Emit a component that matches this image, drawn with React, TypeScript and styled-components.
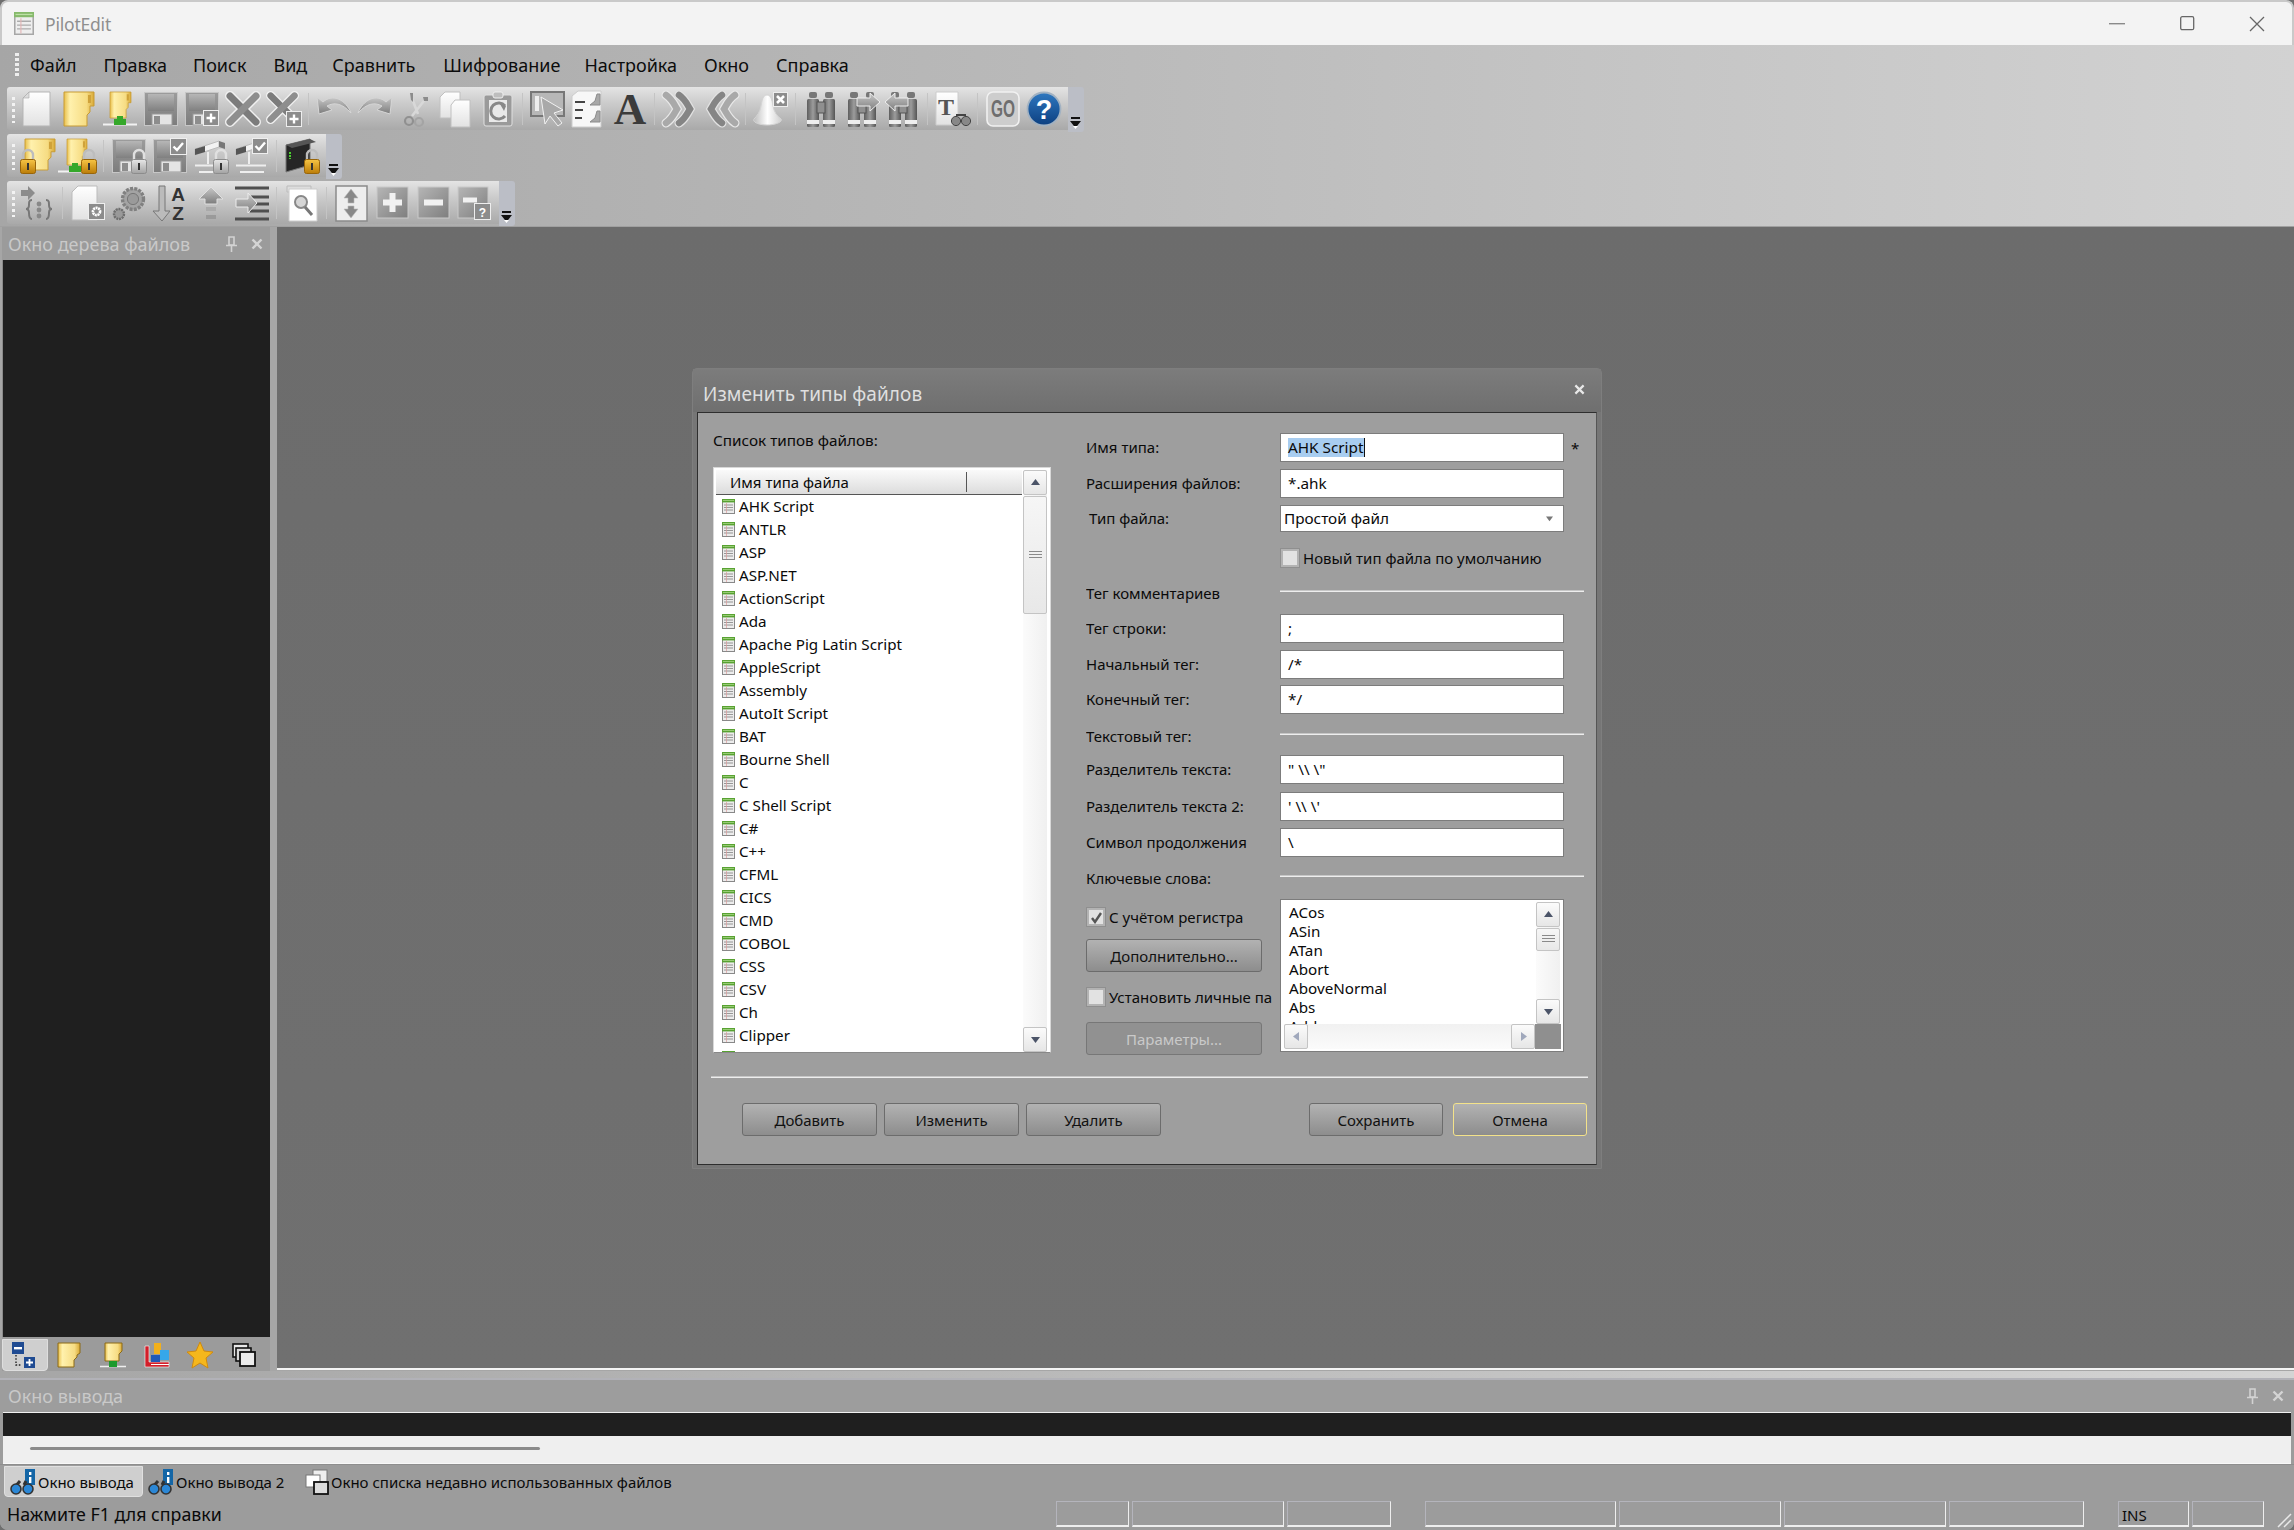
import React from "react";
import styled, { createGlobalStyle } from "styled-components";

const FONT = `"Noto Sans", "Open Sans", "Liberation Sans", sans-serif`;

const Global = createGlobalStyle`
  html, body { margin: 0; padding: 0; background: #6e6e6e; }
  #root { width: 2294px; height: 1530px; overflow: hidden; }
  * { box-sizing: border-box; }
`;

const Window = styled.div`
  position: relative; width: 2294px; height: 1530px; display: flex; flex-direction: column;
  font-family: ${FONT}; color: #0a0a0a; background: #9c9c9c; overflow: hidden;
  border-radius: 8px 8px 8px 8px;
`;
const TitleBar = styled.div`
  height: 45px; flex: none; display: flex; align-items: center; background: #f3f3f3;
  border-top: 2px solid #c9c9c9; border-left: 2px solid #c9c9c9; border-right: 2px solid #c9c9c9;
  border-radius: 8px 8px 0 0; padding-left: 12px;
`;
const TitleIcon = styled.div`opacity: .7; flex: none;`;
const TitleText = styled.span`font-size: 17.5px; color: #8f8f8f; margin-left: 11px; flex: 1; letter-spacing: -.2px;`;
const WinButton = styled.div`width: 70px; height: 43px; display: flex; align-items: center; justify-content: center;`;
const Chrome = styled.div`
  height: 182px; flex: none; display: flex; flex-direction: column;
  background: linear-gradient(90deg, #a6a6a6 0%, #b9b9b9 45%, #d2d2d2 100%);
  border-bottom: 1px solid #a0a0a0;
`;
const MenuBar = styled.div`height: 42px; display: flex; align-items: center; padding: 0 0 2px 15px; flex: none;`;
const MenuGrip = styled.div`
  width: 4px; height: 24px; flex: none;
  background: repeating-linear-gradient(180deg, #eee 0 3px, transparent 3px 5px);
`;
const MenuItem = styled.span<{ $gap: number }>`font-size: 18px; color: #0c0c0c; margin-left: ${p => p.$gap}px; white-space: nowrap;`;
const ToolRow = styled.div`display: flex; height: 45px; margin: 0 0 2px 7px; flex: none; align-items: flex-start;`;
const ToolBody = styled.div`
  display: flex; height: 43px; align-items: center; padding: 0 3.5px 0 10px; position: relative;
  background: linear-gradient(180deg, #e4e4e4 0%, #cdcdcd 35%, #a9a9a9 100%);
  border-radius: 3px 0 0 3px;
`;
const ToolGrip = styled.div`
  position: absolute; left: 5px; top: 10px; width: 3px; height: 26px;
  background: repeating-linear-gradient(180deg, #f3f3f3 0 3px, transparent 3px 6px);
`;
const ToolCell = styled.div`width: 41px; height: 38px; display: flex; align-items: center; justify-content: center; flex: none;`;
const ToolSep = styled.div`
  width: 9px; height: 32px; flex: none; position: relative;
  &::before { content: ""; position: absolute; left: 4px; top: 0; width: 1px; height: 100%; background: #c4c4c4; }
`;
const ToolChevron = styled.div`
  width: 16px; height: 45px; flex: none; background: #bbbec6; border-radius: 0 3px 3px 0;
  display: flex; align-items: flex-end; justify-content: center; padding-bottom: 3px;
`;

const Workspace = styled.div`height: 1144px; flex: none; display: flex; background: #a6a6a6;`;
const LeftPanel = styled.div`
  width: 268px; margin-left: 2px; flex: none; display: flex; flex-direction: column; background: #9b9b9b;
`;
const PanelCaption = styled.div`
  height: 33px; flex: none; display: flex; align-items: center; padding: 0 0 0 6px; font-size: 18px; color: #c9c9c9;
`;
const CaptionText = styled.span`flex: 1; white-space: nowrap;`;
const CaptionIcon = styled.div`width: 26px; display: flex; justify-content: center; align-items: center;`;
const BlackPane = styled.div`flex: 1; background: #1f1f1f; border-left: 1px solid #8a8a8a;`;
const SideTabs = styled.div`height: 34px; flex: none; display: flex; align-items: center; background: #9b9b9b; padding-top: 2px;`;
const SideTab = styled.div<{ $active?: boolean; $w: number }>`
  width: ${p => p.$w}px; height: 32px; display: flex; align-items: center; justify-content: center; flex: none;
  ${p => p.$active ? "background: #cfcfcf; border: 1px solid #dedede; border-radius: 0 0 4px 4px;" : ""}
`;
const MainArea = styled.div`
  margin-left: 7px; flex: 1; background: linear-gradient(180deg, #6c6c6c, #707070); border-bottom: 2px solid #f4f4f4; margin-bottom: 1px;
`;
const Band = styled.div`height: 7px; flex: none; background: linear-gradient(90deg, #a6a6a6, #b9b9b9 45%, #d4d4d4);`;
const OutputCaption = styled(PanelCaption)`
  height: 34px; padding: 0 3px 0 8px; border-top: 2px solid #b2b2b8; background: #9d9d9d;
`;
const OutputBlack = styled.div`height: 24px; flex: none; background: #1f1f1f; border-top: 1px solid #f0f0f0; margin: 0 3px;`;
const OutputLight = styled.div`
  height: 28px; flex: none; background: #efefef; border-bottom: 1px solid #f8f8f8; margin: 0 3px; padding: 11px 0 0 27px;
`;
const HThumb = styled.div`width: 510px; height: 3px; border-radius: 2px; background: #8a8a8a;`;
const OutputTabs = styled.div`height: 33px; flex: none; display: flex; align-items: flex-start; padding-left: 4px; padding-top: 1px; background: #9c9c9c; border-top: 1px solid #8e8e8e;`;
const OutputTab = styled.div<{ $active?: boolean; $w: number }>`
  width: ${p => p.$w}px; height: 31px; display: flex; align-items: center; gap: 2px; font-size: 15px; flex: none; white-space: nowrap; padding-left: 5px;
  ${p => p.$active ? "background: #cfcfcf; border: 1px solid #e0e0e0; border-radius: 0 0 4px 4px;" : ""}
`;
const StatusBar = styled.div`flex: 1; display: flex; align-items: flex-end; background: #9c9c9c; padding: 0 0 3px 7px; position: relative;`;
const StatusText = styled.span`font-size: 17.8px; flex: none; width: 1049px; white-space: nowrap; line-height: 25px;`;
const Pane = styled.div<{ $w: number; $gap?: number }>`
  width: ${p => p.$w}px; height: 26px; margin-left: ${p => p.$gap ?? 3}px; flex: none; font-size: 15px; padding-left: 3px; line-height: 26px;
  border-top: 1px solid #b4b4bc; border-left: 1px solid #b4b4bc; border-right: 1px solid #eee; border-bottom: 2px solid #eee;
`;
const Grip = styled.div`position: absolute; right: 2px; bottom: 2px; width: 17px; height: 17px; display: flex;`;

/* dialog */
const Dialog = styled.div`
  position: absolute; left: 692px; top: 368px; width: 910px; height: 801px; display: flex; flex-direction: column;
  background: #767676; border-radius: 5px 5px 0 0; padding: 0 4px 3px 4px;
  border: 1px solid #7e7e7e;
`;
const DialogTitle = styled.div`
  height: 43px; flex: none; display: flex; align-items: center; justify-content: space-between; padding: 6px 16px 0 10px; margin: 0 -4px;
  font-size: 19px; color: #dfdfdf; background: linear-gradient(180deg, #7c7c7c, #6f6f6f); letter-spacing: .1px;
`;
const DialogClose = styled.div`width: 11px; height: 11px; display: flex; margin-top: -9px;`;
const DialogBody = styled.div`
  flex: 1; background: #9e9e9e; border: 1px solid #2e2e2e; border-right-color: #555; display: flex; flex-direction: column; padding-left: 15px; font-size: 15px;
`;
const Columns = styled.div`display: flex; height: 663px; flex: none; gap: 35px;`;
const ListColumn = styled.div`width: 338px; flex: none; display: flex; flex-direction: column;`;
const ListLabel = styled.div`height: 54px; flex: none; padding-top: 17px; line-height: 21px; font-size: 15.3px;`;
const ListBox = styled.div`
  width: 338px; height: 586px; background: #fff; border: 1px solid #d8d8d8; display: flex; padding: 2px 3px 0 2px; position: relative; border-bottom-color: #888;
`;
const ListMain = styled.div`flex: 1; min-width: 0; display: flex; flex-direction: column; overflow: hidden;`;
const ListHead = styled.div`
  height: 25px; flex: none; display: flex; align-items: center; padding-left: 14px; background: linear-gradient(180deg, #fafafa, #dcdcdc);
  border-bottom: 1px solid #555; margin-right: 1px;
`;
const HeadTitle = styled.span`width: 237px; flex: none; white-space: nowrap; border-right: 1px solid #555; line-height: 20px; height: 20px;`;
const FileRow = styled.div`height: 23px; flex: none; display: flex; align-items: center; padding-left: 6px; gap: 4px; white-space: nowrap; font-size: 15.2px;`;
const FileName = styled.span`margin-top: -2px;`;
const VScroll = styled.div`width: 24px; flex: none; display: flex; flex-direction: column; background: linear-gradient(90deg, #fbfbfb, #f0f0f0);`;
const ScrollBtn = styled.div`
  width: 24px; height: 25px; flex: none; display: flex; align-items: center; justify-content: center;
  background: linear-gradient(180deg, #fbfbfb, #e6e6e6); border: 1px solid #c4c4c4; border-radius: 2px;
`;
const ScrollThumb = styled.div<{ $h: number }>`
  height: ${p => p.$h}px; flex: none; margin-top: 1px; background: linear-gradient(180deg, #f6f6f6, #e8e8e8); border: 1px solid #c4c4c4; border-radius: 2px;
  display: flex; align-items: center; justify-content: center;
`;
const ScrollFill = styled.div`flex: 1;`;
const Lines = styled.div`width: 13px; height: 9px; background: repeating-linear-gradient(180deg, #8a8a8a 0 1px, transparent 1px 3px);`;

const FormColumn = styled.div`width: 500px; flex: none; display: flex; flex-direction: column; padding-top: 20px;`;
const FormRow = styled.div<{ $h?: number; $mt?: number }>`
  height: ${p => p.$h ?? 29}px; margin-top: ${p => p.$mt ?? 0}px; flex: none; display: flex; align-items: center;
`;
const FormLabel = styled.div<{ $indent?: number }>`width: 194px; flex: none; padding: 0 0 1px ${p => p.$indent ?? 0}px; white-space: nowrap; overflow: hidden;`;
const Field = styled.div`
  width: 284px; height: 100%; flex: none; background: #fff; border: 1px solid #7c7c7c; padding-left: 7px; line-height: 26px; white-space: nowrap; font-size: 15.3px;
`;
const Selected = styled.span`background: #a8cdf0; display: inline-block; line-height: 19px; border-right: 1px solid #111;`;
const Asterisk = styled.span`margin-left: 7px;`;
const Combo = styled(Field)`padding-left: 3px; line-height: 25px; display: flex; justify-content: space-between; align-items: center; padding-right: 10px;`;
const CheckWrap = styled.div`display: flex; align-items: center; gap: 3px; white-space: nowrap; height: 20px;`;
const CheckBox = styled.div`
  width: 20px; height: 20px; flex: none; background: #e2e2e2; border: 3px solid #b3b3b3; outline: 1px solid #8f8f8f; outline-offset: -1px; display: flex; align-items: center; justify-content: center;
`;
const Rule = styled.div`width: 304px; height: 2px; background: #ededed; border-top: 1px solid #c6c6c6; align-self: flex-start; margin-top: 7px; flex: none;`;
const KeySection = styled.div`display: flex; margin-top: 11px; flex: none;`;
const KeyLeft = styled.div`width: 194px; flex: none; display: flex; flex-direction: column; padding-top: 8px;`;
const Btn = styled.button<{ $w: number; $focus?: boolean; $off?: boolean }>`
  width: ${p => p.$w}px; height: 33px; padding: 0; font: inherit; font-size: 15px; flex: none;
  border-radius: 3px; border: 1px solid ${p => p.$focus ? "#f3e28a" : p.$off ? "#777" : "#6c6c6c"};
  color: ${p => p.$off ? "#c9c9c9" : "#111"};
  background: ${p => p.$off ? "#919191" : "linear-gradient(180deg, #b2b2b2, #8d8d8d)"};
`;
const KeyBtnA = styled(Btn)`margin-top: 12px;`;
const KeyCheck = styled(CheckWrap)`margin-top: 15px;`;
const KeyBtnB = styled(Btn)`margin-top: 15px;`;
const CancelBtn = styled(Btn)`margin-left: 3px;`;
const KeyBox = styled.div`
  width: 284px; height: 153px; flex: none; background: #fff; border: 1px solid #7c7c7c; padding: 2px 3px; display: flex; flex-direction: column;
`;
const KeyTop = styled.div`height: 122px; flex: none; display: flex;`;
const KeyList = styled.div`flex: 1; overflow: hidden; padding: 1px 0 0 5px; font-size: 15.2px;`;
const KeyItem = styled.div`height: 19px; line-height: 19px;`;
const KeyBottom = styled.div`flex: 1; display: flex; background: linear-gradient(180deg, #f1f1f1, #fbfbfb);`;
const HFill = styled.div`flex: 1;`;
const Corner = styled.div`width: 26px; background: #8f8f8f; flex: none; margin-right: -1px;`;
const DividerFull = styled.div`width: 877px; height: 2px; background: #ededed; margin: 0 0 0 -2px; flex: none; border-top: 1px solid #c6c6c6;`;
const ActionRow = styled.div`display: flex; margin-top: 25px; padding-left: 29px; gap: 7px;`;
const Spacer = styled.div`width: 134px; flex: none;`;

/* icons */
const Defs = () => (
  <svg width="0" height="0" style={{ position: "absolute" }}>
    <defs>
      <linearGradient id="gDoc" x1="0" y1="0" x2="0" y2="1"><stop offset="0" stopColor="#fff" /><stop offset="1" stopColor="#e2e2e2" /></linearGradient>
      <linearGradient id="gFold" x1="0" y1="0" x2="1" y2="0"><stop offset="0" stopColor="#e8bf4c" /><stop offset=".2" stopColor="#fff1ad" /><stop offset=".75" stopColor="#f6dc83" /><stop offset="1" stopColor="#d8a835" /></linearGradient>
      <linearGradient id="gDisk" x1="0" y1="0" x2="0" y2="1"><stop offset="0" stopColor="#9c9c9c" /><stop offset="1" stopColor="#7c7c7c" /></linearGradient>
      <linearGradient id="gDiskL" x1="0" y1="0" x2="0" y2="1"><stop offset="0" stopColor="#b6b6b6" /><stop offset="1" stopColor="#808080" /></linearGradient>
      <linearGradient id="gArrow" x1="0" y1="0" x2="0" y2="1"><stop offset="0" stopColor="#c9c9c9" /><stop offset="1" stopColor="#7c7c7c" /></linearGradient>
      <linearGradient id="gLock" x1="0" y1="0" x2="0" y2="1"><stop offset="0" stopColor="#f7c545" /><stop offset="1" stopColor="#bb7c07" /></linearGradient>
      <linearGradient id="gLockG" x1="0" y1="0" x2="0" y2="1"><stop offset="0" stopColor="#e8e8e8" /><stop offset="1" stopColor="#a2a2a2" /></linearGradient>
      <linearGradient id="gBarrel" x1="0" y1="0" x2="1" y2="0"><stop offset="0" stopColor="#5e5e5e" /><stop offset=".5" stopColor="#9c9c9c" /><stop offset="1" stopColor="#555" /></linearGradient>
      <linearGradient id="gHelp" x1="0" y1="0" x2="0" y2="1"><stop offset="0" stopColor="#2f78c0" /><stop offset="1" stopColor="#0c3f80" /></linearGradient>
      <linearGradient id="gBtn" x1="0" y1="0" x2="1" y2="1"><stop offset="0" stopColor="#b6b6b6" /><stop offset="1" stopColor="#7e7e7e" /></linearGradient>
      <linearGradient id="gBell" x1="0" y1="0" x2="1" y2="0"><stop offset="0" stopColor="#bdbdbd" /><stop offset=".5" stopColor="#fff" /><stop offset="1" stopColor="#cfcfcf" /></linearGradient>
    </defs>
  </svg>
);

const Ico = styled.svg.attrs({ viewBox: "0 0 36 36", width: 36, height: 36 })`display: block; overflow: visible;`;
const IconText = styled.text<{ $serif?: boolean }>`font-family: ${p => p.$serif ? `"Liberation Serif", serif` : `"Liberation Sans", sans-serif`}; font-weight: 700;`;

const Page = ({ d = "M9 1h21v34H3V7z" }: { d?: string }) => (
  <g>
    <path d={d} fill="url(#gDoc)" stroke="#b5b5b5" />
    <path d="M9 1v6H3z" fill="#dcdcdc" stroke="#aaa" strokeWidth=".6" />
  </g>
);
const FolderShape = ({ x = 3, w = 30, h = 34 }: { x?: number; w?: number; h?: number }) => (
  <g transform={`translate(${x} 1) scale(${w / 30} ${h / 34})`}>
    <path d="M0 0h30v14h-4v6l-3 3v11H0z" fill="url(#gFold)" stroke="#c79b34" />
    <path d="M24 3h3v8h-3z" fill="#cfa23a" />
  </g>
);
const NetBase = ({ cx = 18 }: { cx?: number }) => (
  <g>
    <path d={`M${cx - 17} 33.5h34`} stroke="#f2f2f2" strokeWidth="2" />
    <path d={`M${cx - 3} 25h6v3h3v6H${cx - 6}v-6h3z`} fill="#35a82a" />
  </g>
);
const Disk = () => (
  <g>
    <rect x="1.5" y="1.5" width="33" height="33" fill="url(#gDisk)" stroke="#c7c7c7" />
    <rect x="5" y="3" width="26" height="17" fill="url(#gDiskL)" />
    <rect x="9" y="23" width="20" height="11" fill="#e4e4e4" stroke="#9a9a9a" />
    <rect x="11" y="25" width="6" height="8" fill="#8d8d8d" />
  </g>
);
const Badge = ({ kind, x = 19, y = 19, s = 16 }: { kind: "plus" | "check" | "x" | "q" | "gear"; x?: number; y?: number; s?: number }) => (
  <g transform={`translate(${x} ${y})`}>
    <rect x=".5" y=".5" width={s - 1} height={s - 1} fill="#8c8c8c" stroke="#eee" />
    {kind === "plus" && <path d={`M${s / 2} 3.5v${s - 7}M3.5 ${s / 2}h${s - 7}`} stroke="#fff" strokeWidth="2.4" />}
    {kind === "check" && <path d={`M3.5 ${s / 2}l3.5 3.5 6-7`} stroke="#fff" strokeWidth="2.4" fill="none" />}
    {kind === "x" && <path d={`M4 4l${s - 8} ${s - 8}M${s - 4} 4l-${s - 8} ${s - 8}`} stroke="#fff" strokeWidth="2.6" />}
    {kind === "q" && <IconText x={s / 2} y={s - 3.5} fontSize="12" fill="#fff" textAnchor="middle">?</IconText>}
    {kind === "gear" && <circle cx={s / 2} cy={s / 2} r="3.6" fill="none" stroke="#fff" strokeWidth="2.6" strokeDasharray="2 .6" />}
  </g>
);
const BigX = ({ scale = 1 }: { scale?: number }) => (
  <g transform={`scale(${scale})`}>
    <path d="M5 5l26 26M31 5L5 31" stroke="#f0f0f0" strokeWidth="10" strokeLinecap="round" />
    <path d="M5 5l26 26" stroke="#7c7c7c" strokeWidth="7" strokeLinecap="round" />
    <path d="M31 5L5 31" stroke="#8e8e8e" strokeWidth="7" strokeLinecap="round" />
  </g>
);
const Lock = ({ x = 0, y = 0, gold = true }: { x?: number; y?: number; gold?: boolean }) => (
  <g transform={`translate(${x} ${y})`}>
    <path d="M3 12V6a5 5 0 0 1 10 0v6" fill="none" stroke={gold ? "#bdbdbd" : "#e0e0e0"} strokeWidth="2.4" />
    <rect x=".5" y="10.5" width="15" height="14" rx="2" fill={gold ? "url(#gLock)" : "url(#gLockG)"} stroke={gold ? "#98650a" : "#8c8c8c"} />
    <rect x="7" y="14" width="2" height="7" fill="#333" />
  </g>
);
const Drive = () => (
  <g>
    <path d="M2 11l24-8v6l-24 8z" fill="#f2f2f2" stroke="#bbb" />
    <path d="M2 11l10-3v6l-10 3z" fill="#555" />
    <path d="M26 3l6 2v6l-6-2z" fill="#777" />
    <path d="M15 14v12M2 27.5h30M6 34h24" stroke="#eee" strokeWidth="2" />
  </g>
);
const Barrels = () => (
  <g>
    <rect x="6" y="1" width="8" height="6" rx="2" fill="#777" />
    <rect x="22" y="1" width="8" height="6" rx="2" fill="#777" />
    <rect x="4" y="8" width="12" height="28" rx="1.5" fill="url(#gBarrel)" />
    <rect x="20" y="8" width="12" height="28" rx="1.5" fill="url(#gBarrel)" />
    <rect x="14" y="11" width="8" height="11" fill="#8f8f8f" stroke="#555" />
    <rect x="4" y="29" width="12" height="4" fill="#eee" />
    <rect x="20" y="29" width="12" height="4" fill="#eee" />
  </g>
);
const SmallArrow = ({ flip = false }: { flip?: boolean }) => (
  <path d={flip ? "M36 11L26 2v5H13v8h13v5z" : "M0 11l10-9v5h13v8H10v5z"} fill="url(#gArrow)" stroke="#eee" />
);
const Wave = ({ flip = false }: { flip?: boolean }) => (
  <g transform={flip ? "translate(36 0) scale(-1 1)" : ""} fill="none" strokeLinecap="round">
    <path d="M4 4c6 4 8 9 11 14-3 5-5 10-11 14" stroke="#e8e8e8" strokeWidth="9" />
    <path d="M4 4c6 4 8 9 11 14-3 5-5 10-11 14" stroke="#a9a9a9" strokeWidth="6.5" />
    <path d="M17 4c6 4 8 9 11 14-3 5-5 10-11 14" stroke="#e2e2e2" strokeWidth="9" />
    <path d="M17 4c6 4 8 9 11 14-3 5-5 10-11 14" stroke="#858585" strokeWidth="6.5" />
  </g>
);

const UNDO = "M1 6l2 17 13-4-5-4c7-4 15-3 24 7C30 9 17 2 7 11z";

const I = {
  New: () => <Ico><Page /></Ico>,
  Open: () => <Ico><FolderShape /></Ico>,
  OpenNet: () => <Ico><FolderShape x={8} w={21} h={26} /><NetBase /></Ico>,
  Save: () => <Ico><Disk /></Ico>,
  SavePlus: () => <Ico><Disk /><Badge kind="plus" /></Ico>,
  Close: () => <Ico><BigX /></Ico>,
  ClosePlus: () => <Ico><BigX scale={.92} /><Badge kind="plus" x={20} y={20} /></Ico>,
  Undo: () => <Ico><path d={UNDO} fill="url(#gArrow)" stroke="#d6d6d6" /></Ico>,
  Redo: () => <Ico><g transform="translate(36 0) scale(-1 1)"><path d={UNDO} fill="url(#gArrow)" stroke="#d6d6d6" /></g></Ico>,
  Cut: () => <Ico><path d="M12 2l8 21M29 6L14 25" stroke="#d8d8d8" strokeWidth="2.6" /><circle cx="11" cy="30" r="4" fill="none" stroke="#909090" strokeWidth="2.2" /><circle cx="21" cy="31" r="4" fill="none" stroke="#a4a4a4" strokeWidth="2.2" /><path d="M12 2h3v9l-2-2z" fill="#8c8c8c" /><path d="M25 6h5v4h-4z" fill="#8c8c8c" /></Ico>,
  Copy: () => <Ico><path d="M6 1h15v26H1V6z" fill="url(#gDoc)" stroke="#c0c0c0" /><path d="M16 9h15v27H12V14z" fill="url(#gDoc)" stroke="#c0c0c0" /></Ico>,
  Paste: () => <Ico><rect x="4" y="4" width="28" height="31" rx="2" fill="#9a9a9a" stroke="#e0e0e0" /><rect x="13" y="1" width="10" height="6" rx="2" fill="#bdbdbd" stroke="#eee" /><path d="M9 9h18v22H9z" fill="#e9e9e9" /><path d="M25 15a8 8 0 1 0 0 10" fill="none" stroke="#888" strokeWidth="3" /><path d="M20 13l6 2-2 5z" fill="#888" /></Ico>,
  Select: () => <Ico><rect x="1" y="1" width="33" height="24" fill="#b7b7b7" stroke="#777" strokeWidth="2" /><rect x="5" y="5" width="4" height="15" fill="#eee" /><path d="M11 6l4 27 5-8 8 10 4-3-8-10 9-3z" fill="#a9a9a9" stroke="#f2f2f2" /></Ico>,
  List: () => <Ico><path d="M1 5l6-5h23v36H1z" fill="#f7f7f7" stroke="#ccc" /><path d="M4 11h10M4 19h8M4 27h7" stroke="#444" strokeWidth="2.2" /><path d="M29 3v11h-10l5-4 2-7zM29 20v11h-10l5-4 2-7z" fill="#a8a8a8" stroke="#8c8c8c" /></Ico>,
  Font: () => <Ico><IconText $serif x="18" y="33" fontSize="45" fill="#3b3b3b" textAnchor="middle">A</IconText></Ico>,
  Next: () => <Ico><Wave /></Ico>,
  Prev: () => <Ico><Wave flip /></Ico>,
  Bell: () => <Ico><path d="M14 4c4 0 5 5 6 11s4 10 8 13c2 3-6 6-14 6S-1 31 1 28c3-3 6-7 7-13s2-11 6-11z" fill="url(#gBell)" stroke="#d4d4d4" /><Badge kind="x" x={20} y={1} s={15} /></Ico>,
  Find: () => <Ico><Barrels /></Ico>,
  FindPrev: () => <Ico><Barrels /><SmallArrow flip /></Ico>,
  FindNext: () => <Ico><Barrels /><SmallArrow /></Ico>,
  FindFile: () => <Ico><path d="M1 1h22v33H1z" fill="url(#gDoc)" stroke="#ccc" /><IconText $serif x="11" y="24" fontSize="24" fill="#555" textAnchor="middle">T</IconText><circle cx="21" cy="30" r="4.6" fill="#888" stroke="#444" /><circle cx="31" cy="30" r="4.6" fill="#888" stroke="#444" /><path d="M21 24h10" stroke="#444" strokeWidth="2" /></Ico>,
  Go: () => <Ico><rect x="2" y="1" width="32" height="34" rx="6" fill="#cdcdcd" stroke="#f1f1f1" strokeWidth="1.6" /><IconText x="18" y="26" fontSize="23" fill="#6e6e6e" textAnchor="middle" textLength="24" lengthAdjust="spacingAndGlyphs">GO</IconText></Ico>,
  Help: () => <Ico><circle cx="18" cy="18" r="16.5" fill="url(#gHelp)" stroke="#a2b2c2" strokeWidth="1.8" /><IconText x="18" y="28" fontSize="27" fill="#fff" textAnchor="middle">?</IconText></Ico>,
  FolderLock: () => <Ico><FolderShape x={5} w={30} h={31} /><Lock x={0} y={11} /></Ico>,
  NetLock: () => <Ico><FolderShape x={6} w={20} h={26} /><NetBase cx={14} /><Lock x={20} y={11} /></Ico>,
  SaveLock: () => <Ico><Disk /><Lock x={20} y={11} gold={false} /></Ico>,
  SaveCheck: () => <Ico><Disk /><Badge kind="check" x={18} y={0} s={17} /></Ico>,
  DriveLock: () => <Ico><Drive /><Lock x={20} y={11} gold={false} /></Ico>,
  DriveCheck: () => <Ico><Drive /><Badge kind="check" x={18} y={0} s={16} /></Ico>,
  RouterLock: () => <Ico><path d="M2 7L26 1v26L2 34z" fill="#262626" stroke="#777" /><path d="M2 7L26 1l6 3-24 6z" fill="#555" /><path d="M6 14v7" stroke="#4bd12e" strokeWidth="2" strokeDasharray="2 1" /><Lock x={20} y={11} /></Ico>,
  Braces: () => <Ico><path d="M1 5h7V1l7 7-7 7v-4H1z" fill="#8c8c8c" /><path d="M12 15c-3 0-3 2-3 5s-1 4-3 4c2 0 3 1 3 4s0 6 3 6M26 15c3 0 3 2 3 5s1 4 3 4c-2 0-3 1-3 4s0 6-3 6" fill="none" stroke="#777" strokeWidth="2" /><circle cx="19" cy="19" r="2.4" fill="#888" /><circle cx="19" cy="25" r="2.4" fill="#888" /><circle cx="19" cy="31" r="2.4" fill="#888" /></Ico>,
  DocGear: () => <Ico><path d="M8 1h19v34H2V7z" fill="url(#gDoc)" stroke="#bbb" /><Badge kind="gear" x={18} y={18} s={17} /></Ico>,
  Gears: () => <Ico><circle cx="22" cy="14" r="10.5" fill="#a3a3a3" stroke="#808080" strokeWidth="3.4" strokeDasharray="3 1.2" /><circle cx="22" cy="14" r="5.6" fill="#9a9a9a" stroke="#777" /><circle cx="8" cy="29" r="5" fill="#999" stroke="#6e6e6e" strokeWidth="2.4" strokeDasharray="2 .8" /></Ico>,
  Sort: () => <Ico><path d="M7 1h6v25h5L10 36 1 26h6z" fill="#bbb" stroke="#777" /><IconText x="26" y="16" fontSize="19" fill="#333" textAnchor="middle">A</IconText><IconText x="26" y="35" fontSize="19" fill="#333" textAnchor="middle">Z</IconText></Ico>,
  UpLevel: () => <Ico><path d="M18 2l12 12h-6v5H12v-5H6z" fill="url(#gArrow)" stroke="#e0e0e0" /><rect x="13" y="22" width="10" height="4" fill="#aaa" /><rect x="13" y="30" width="10" height="4" fill="#9a9a9a" /></Ico>,
  Indent: () => <Ico><path d="M1 3h34M16 12h19M18 19h17M16 26h19M1 34h34" stroke="#4f4f4f" strokeWidth="3" /><path d="M2 14h12V8l9 10-9 10v-6H2z" fill="url(#gArrow)" stroke="#ececec" /></Ico>,
  FindDoc: () => <Ico><path d="M3 1h24v6H3z" fill="#ddd" stroke="#bbb" /><path d="M5 4h28v32H5z" fill="#fff" stroke="#ccc" /><circle cx="17" cy="17" r="6" fill="#d5d5d5" stroke="#888" strokeWidth="2" /><path d="M21 22l7 8" stroke="#777" strokeWidth="3" /></Ico>,
  Fit: () => <Ico><rect x="2" y="1" width="31" height="35" fill="#ededed" stroke="#8a8a8a" strokeWidth="1.5" /><path d="M17 4l7 9h-4v5h-6v-5h-4zM17 33l7-9h-4v-3h-6v3h-4z" fill="#888" stroke="#bbb" strokeWidth=".6" /></Ico>,
  Plus: () => <Ico><rect x="2" y="2" width="31" height="31" fill="url(#gBtn)" stroke="#c9c9c9" /><path d="M17.5 8v19M8 17.5h19" stroke="#f1f1f1" strokeWidth="6" /></Ico>,
  Minus: () => <Ico><rect x="2" y="2" width="31" height="31" fill="url(#gBtn)" stroke="#c9c9c9" /><path d="M8 17.5h19" stroke="#f1f1f1" strokeWidth="6" /></Ico>,
  Help2: () => <Ico><rect x="1" y="2" width="30" height="31" fill="url(#gBtn)" stroke="#c9c9c9" /><path d="M6 15h14" stroke="#f1f1f1" strokeWidth="5" /><Badge kind="q" x={17} y={18} s={17} /></Ico>,
};

type Tool = keyof typeof I | "|";
const BAR1: Tool[] = ["New", "Open", "OpenNet", "Save", "SavePlus", "Close", "ClosePlus", "|", "Undo", "Redo", "Cut", "Copy", "Paste", "|", "Select", "List", "Font", "|", "Next", "Prev", "|", "Bell", "|", "Find", "FindPrev", "FindNext", "|", "FindFile", "|", "Go", "Help"];
const BAR2: Tool[] = ["FolderLock", "NetLock", "|", "SaveLock", "SaveCheck", "DriveLock", "DriveCheck", "|", "RouterLock"];
const BAR3: Tool[] = ["Braces", "|", "DocGear", "Gears", "Sort", "UpLevel", "Indent", "|", "FindDoc", "|", "Fit", "Plus", "Minus", "Help2"];

const Chevron = () => (
  <svg width="11" height="13" viewBox="0 0 11 13"><path d="M1 1h9v2H1z" fill="#111" /><path d="M0 5h11L5.5 12z" fill="#111" /><path d="M3 10h5l-2.5 3z" fill="#fff" /></svg>
);
const Toolbar = ({ tools }: { tools: Tool[] }) => (
  <ToolRow>
    <ToolBody>
      <ToolGrip />
      {tools.map((t, i) => {
        if (t === "|") return <ToolSep key={i} />;
        const C = I[t];
        return <ToolCell key={i}><C /></ToolCell>;
      })}
    </ToolBody>
    <ToolChevron><Chevron /></ToolChevron>
  </ToolRow>
);

const FileIcon = ({ size = 13 }: { size?: number }) => (
  <svg width={size} height={size * 15 / 13} viewBox="0 0 13 15" style={{ flex: "none", display: "block" }}>
    <rect x=".5" y=".5" width="12" height="14" fill="#ececec" stroke="#888" />
    <rect x="0" y="0" width="13" height="3.4" fill="#58a232" />
    <rect x="1" y="1.2" width="11" height=".8" fill="#a9d888" />
    <path d="M2 6h9M2 8.5h9M2 11h9" stroke="#8d8d8d" strokeWidth=".9" />
    <path d="M4.5 4v10" stroke="#d99" strokeWidth=".7" />
  </svg>
);
const Pin = () => (
  <svg width="11" height="16" viewBox="0 0 11 16"><path d="M3 1h5v8H3z" fill="none" stroke="#d2d2d2" strokeWidth="1.6" /><path d="M0 9.5h11M5.5 10v6" stroke="#d2d2d2" strokeWidth="1.6" /></svg>
);
const CrossSmall = ({ c = "#d4d4d4", s = 12 }: { c?: string; s?: number }) => (
  <svg width={s} height={s} viewBox="0 0 12 12"><path d="M1.5 1.5l9 9M10.5 1.5l-9 9" stroke={c} strokeWidth="2.4" /></svg>
);
const Tri = ({ dir, c = "#4b5468", s = 9 }: { dir: "u" | "d" | "l" | "r"; c?: string; s?: number }) => {
  const d = { u: "M0 7L4.5 1 9 7z", d: "M0 2l4.5 6L9 2z", l: "M7 0L1 4.5 7 9z", r: "M2 0l6 4.5L2 9z" }[dir];
  return <svg width={s} height={s} viewBox="0 0 9 9"><path d={d} fill={c} /></svg>;
};

const TreeIcon = () => (
  <svg width="28" height="28" viewBox="0 0 28 28"><rect x="1" y="1" width="12" height="12" fill="#1f4b92" /><rect x="3" y="6" width="8" height="2.4" fill="#fff" /><path d="M5 14v10h6" fill="none" stroke="#222" strokeWidth="1.4" strokeDasharray="1.6 1.6" /><rect x="13" y="16" width="11" height="11" fill="#1f4b92" /><path d="M18.5 18v7M15 21.5h7" stroke="#fff" strokeWidth="1.8" /></svg>
);
const TabFolder = () => (
  <svg width="24" height="26" viewBox="0 0 24 26"><path d="M1 1h22v10l-3 2v2l-3 3v7H1z" fill="url(#gFold)" stroke="#8c6b16" /></svg>
);
const TabNet = () => (
  <svg width="26" height="26" viewBox="0 0 26 26"><path d="M5 1h17v8l-3 3v7H5z" fill="url(#gFold)" stroke="#8c6b16" /><path d="M0 24.5h26" stroke="#eee" strokeWidth="1.6" /><rect x="9" y="19" width="8" height="6" fill="#1d9a2c" /></svg>
);
const TabApps = () => (
  <svg width="26" height="26" viewBox="0 0 26 26"><path d="M1 4h4v16h20v5H1z" fill="#d21f2a" stroke="#fff" strokeWidth=".6" /><rect x="7" y="22" width="18" height="1" fill="#fff" /><rect x="10" y="1" width="7" height="11" fill="#f2b01c" /><rect x="7" y="13" width="9" height="7" fill="#2159b8" /><rect x="16" y="8" width="9" height="10" fill="#36a7ea" /></svg>
);
const TabStar = () => (
  <svg width="28" height="28" viewBox="0 0 28 28"><path d="M14 1l4 9 9 1-7 6 2 10-8-5-8 5 2-10-7-6 9-1z" fill="#f5b71d" stroke="#cf8a10" /></svg>
);
const TabPages = () => (
  <svg width="24" height="24" viewBox="0 0 24 24"><rect x="1" y="1" width="15" height="13" fill="#e8e8e8" stroke="#111" strokeWidth="1.6" /><rect x="4" y="5" width="15" height="13" fill="#d8d8d8" stroke="#111" strokeWidth="1.6" /><rect x="8" y="9" width="15" height="14" fill="#ececec" stroke="#111" strokeWidth="1.8" /></svg>
);
const OutIcon = () => (
  <svg width="26" height="26" viewBox="0 0 26 26" style={{ flex: "none" }}><rect x="15" y="0" width="10" height="16" fill="#1466a6" /><rect x="19" y="3" width="2.4" height="3" fill="#fff" /><rect x="19" y="8" width="2.4" height="6" fill="#fff" /><path d="M4 19l6-7M14 16l2-4" stroke="#333" strokeWidth="3" /><circle cx="6" cy="20" r="5" fill="#2b87d6" stroke="#333" strokeWidth="1.6" /><circle cx="18" cy="20" r="5" fill="#2b87d6" stroke="#333" strokeWidth="1.6" /></svg>
);
const RecentIcon = () => (
  <svg width="24" height="26" viewBox="0 0 24 26" style={{ flex: "none" }}><rect x="8" y="1" width="14" height="12" fill="#eee" stroke="#777" /><rect x="1" y="6" width="14" height="12" fill="#fff" stroke="#777" /><rect x="9" y="13" width="14" height="12" fill="#ddd" stroke="#111" strokeWidth="1.8" /></svg>
);

const FILES = ["AHK Script", "ANTLR", "ASP", "ASP.NET", "ActionScript", "Ada", "Apache Pig Latin Script", "AppleScript", "Assembly", "AutoIt Script", "BAT", "Bourne Shell", "C", "C Shell Script", "C#", "C++", "CFML", "CICS", "CMD", "COBOL", "CSS", "CSV", "Ch", "Clipper", ""];
const KEYS = ["ACos", "ASin", "ATan", "Abort", "AboveNormal", "Abs", "Add"];
const MENUS: [string, number][] = [["Файл", 11], ["Правка", 27], ["Поиск", 26], ["Вид", 27], ["Сравнить", 25], ["Шифрование", 28], ["Настройка", 24], ["Окно", 27], ["Справка", 27]];

export default function App() {
  return (
    <Window>
      <Global />
      <Defs />
      <TitleBar>
        <TitleIcon><FileIcon size={20} /></TitleIcon>
        <TitleText>PilotEdit</TitleText>
        <WinButton><svg width="16" height="2"><rect width="16" height="1.4" fill="#8a8a8a" /></svg></WinButton>
        <WinButton><svg width="15" height="15"><rect x=".7" y=".7" width="13" height="13" rx="1.5" fill="none" stroke="#666" strokeWidth="1.3" /></svg></WinButton>
        <WinButton><svg width="16" height="16"><path d="M1 1l14 14M15 1L1 15" stroke="#666" strokeWidth="1.3" /></svg></WinButton>
      </TitleBar>
      <Chrome>
        <MenuBar>
          <MenuGrip />
          {MENUS.map(([m, g]) => <MenuItem key={m} $gap={g}>{m}</MenuItem>)}
        </MenuBar>
        <Toolbar tools={BAR1} />
        <Toolbar tools={BAR2} />
        <Toolbar tools={BAR3} />
      </Chrome>
      <Workspace>
        <LeftPanel>
          <PanelCaption>
            <CaptionText>Окно дерева файлов</CaptionText>
            <CaptionIcon><Pin /></CaptionIcon>
            <CaptionIcon><CrossSmall /></CaptionIcon>
          </PanelCaption>
          <BlackPane />
          <SideTabs>
            <SideTab $active $w={46}><TreeIcon /></SideTab>
            <SideTab $w={42}><TabFolder /></SideTab>
            <SideTab $w={46}><TabNet /></SideTab>
            <SideTab $w={42}><TabApps /></SideTab>
            <SideTab $w={44}><TabStar /></SideTab>
            <SideTab $w={44}><TabPages /></SideTab>
          </SideTabs>
        </LeftPanel>
        <MainArea />
      </Workspace>
      <Band />
      <OutputCaption>
        <CaptionText>Окно вывода</CaptionText>
        <CaptionIcon><Pin /></CaptionIcon>
        <CaptionIcon><CrossSmall /></CaptionIcon>
      </OutputCaption>
      <OutputBlack />
      <OutputLight><HThumb /></OutputLight>
      <OutputTabs>
        <OutputTab $active $w={139}><OutIcon />Окно вывода</OutputTab>
        <OutputTab $w={157}><OutIcon />Окно вывода 2</OutputTab>
        <OutputTab $w={380}><RecentIcon />Окно списка недавно использованных файлов</OutputTab>
      </OutputTabs>
      <StatusBar>
        <StatusText>Нажмите F1 для справки</StatusText>
        <Pane $w={73} $gap={0} />
        <Pane $w={152} />
        <Pane $w={104} />
        <Pane $w={191} $gap={34} />
        <Pane $w={162} />
        <Pane $w={162} />
        <Pane $w={135} />
        <Pane $w={71} $gap={34}>INS</Pane>
        <Pane $w={72} />
        <Grip><svg width="17" height="17"><path d="M16 3L3 16M16 9L9 16" stroke="#e8e8e8" strokeWidth="1.5" /></svg></Grip>
      </StatusBar>

      <Dialog>
        <DialogTitle>
          Изменить типы файлов
          <DialogClose><CrossSmall c="#e8e8e8" s={11} /></DialogClose>
        </DialogTitle>
        <DialogBody>
          <Columns>
            <ListColumn>
              <ListLabel>Список типов файлов:</ListLabel>
              <ListBox>
                <ListMain>
                  <ListHead><HeadTitle>Имя типа файла</HeadTitle></ListHead>
                  {FILES.map((f, i) => <FileRow key={i}><FileIcon /><FileName>{f}</FileName></FileRow>)}
                </ListMain>
                <VScroll>
                  <ScrollBtn><Tri dir="u" /></ScrollBtn>
                  <ScrollThumb $h={118}><Lines /></ScrollThumb>
                  <ScrollFill />
                  <ScrollBtn><Tri dir="d" /></ScrollBtn>
                </VScroll>
              </ListBox>
            </ListColumn>
            <FormColumn>
              <FormRow><FormLabel>Имя типа:</FormLabel><Field><Selected>AHK Script</Selected></Field><Asterisk>*</Asterisk></FormRow>
              <FormRow $mt={7}><FormLabel>Расширения файлов:</FormLabel><Field>*.ahk</Field></FormRow>
              <FormRow $mt={7} $h={27}><FormLabel $indent={3}>Тип файла:</FormLabel><Combo>Простой файл<Tri dir="d" c="#777" s={7} /></Combo></FormRow>
              <FormRow $mt={16} $h={19}><FormLabel /><CheckWrap><CheckBox />Новый тип файла по умолчанию</CheckWrap></FormRow>
              <FormRow $mt={16} $h={20}><FormLabel>Тег комментариев</FormLabel><Rule /></FormRow>
              <FormRow $mt={11}><FormLabel>Тег строки:</FormLabel><Field>;</Field></FormRow>
              <FormRow $mt={7}><FormLabel>Начальный тег:</FormLabel><Field>/*</Field></FormRow>
              <FormRow $mt={6}><FormLabel>Конечный тег:</FormLabel><Field>*/</Field></FormRow>
              <FormRow $mt={12} $h={20}><FormLabel>Текстовый тег:</FormLabel><Rule /></FormRow>
              <FormRow $mt={9}><FormLabel>Разделитель текста:</FormLabel><Field>" \\ \"</Field></FormRow>
              <FormRow $mt={8}><FormLabel>Разделитель текста 2:</FormLabel><Field>' \\ \'</Field></FormRow>
              <FormRow $mt={7}><FormLabel>Символ продолжения</FormLabel><Field>\</Field></FormRow>
              <FormRow $mt={11} $h={20}><FormLabel>Ключевые слова:</FormLabel><Rule /></FormRow>
              <KeySection>
                <KeyLeft>
                  <CheckWrap>
                    <CheckBox><svg width="13" height="13" viewBox="0 0 13 13"><path d="M2 7l3 4 6-9" fill="none" stroke="#555" strokeWidth="2.4" /></svg></CheckBox>
                    С учётом регистра
                  </CheckWrap>
                  <KeyBtnA $w={176}>Дополнительно...</KeyBtnA>
                  <KeyCheck><CheckBox />Установить личные па</KeyCheck>
                  <KeyBtnB $w={176} $off>Параметры...</KeyBtnB>
                </KeyLeft>
                <KeyBox>
                  <KeyTop>
                    <KeyList>{KEYS.map(k => <KeyItem key={k}>{k}</KeyItem>)}</KeyList>
                    <VScroll>
                      <ScrollBtn><Tri dir="u" /></ScrollBtn>
                      <ScrollThumb $h={23}><Lines /></ScrollThumb>
                      <ScrollFill />
                      <ScrollBtn><Tri dir="d" /></ScrollBtn>
                    </VScroll>
                  </KeyTop>
                  <KeyBottom>
                    <ScrollBtn><Tri dir="l" c="#a0a8bc" /></ScrollBtn>
                    <HFill />
                    <ScrollBtn><Tri dir="r" c="#a0a8bc" /></ScrollBtn>
                    <Corner />
                  </KeyBottom>
                </KeyBox>
              </KeySection>
            </FormColumn>
          </Columns>
          <DividerFull />
          <ActionRow>
            <Btn $w={135}>Добавить</Btn>
            <Btn $w={135}>Изменить</Btn>
            <Btn $w={135}>Удалить</Btn>
            <Spacer />
            <Btn $w={134}>Сохранить</Btn>
            <CancelBtn $w={134} $focus>Отмена</CancelBtn>
          </ActionRow>
        </DialogBody>
      </Dialog>
    </Window>
  );
}
